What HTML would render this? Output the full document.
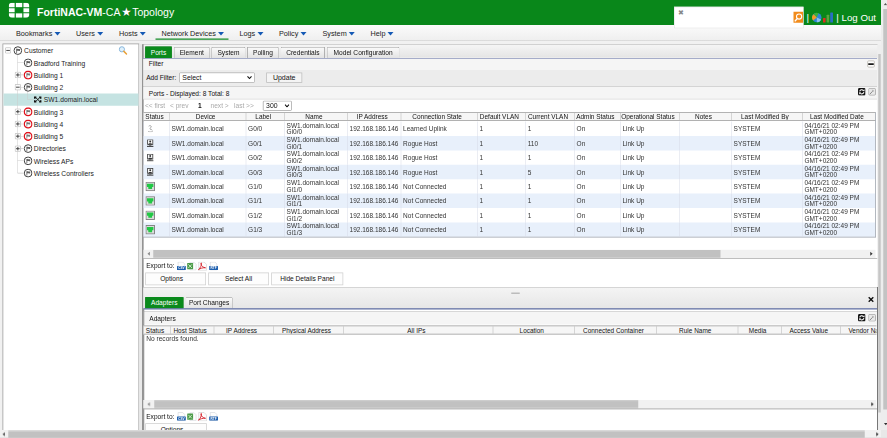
<!DOCTYPE html>
<html>
<head>
<meta charset="utf-8">
<title>FortiNAC Topology</title>
<style>
html,body{margin:0;padding:0;}
body{width:887px;height:438px;overflow:hidden;background:#fff;position:relative;font-family:"Liberation Sans",sans-serif;font-size:6.6px;color:#222;}
.abs{position:absolute;}
#sc{position:absolute;left:0;top:0;width:3548px;height:1752px;transform:scale(0.25);transform-origin:0 0;}
#zz{position:absolute;left:0;top:0;width:887px;height:438px;zoom:4;overflow:hidden;}
#hdr{left:0;top:0;width:881px;height:25.1px;background:#09871a;}
#title{left:37px;top:6.4px;font-size:10.5px;color:#fff;white-space:nowrap;}
#title b{font-weight:bold;}
#menubar{left:0;top:25.1px;width:881px;height:15.2px;background:linear-gradient(#fbfbfb,#efefef);border-bottom:0.8px solid #d4d4d4;}
.mi{position:absolute;top:29.2px;font-size:7.25px;color:#222;white-space:nowrap;}
.mi i{display:inline-block;width:0;height:0;border-left:3.1px solid transparent;border-right:3.1px solid transparent;border-top:3.7px solid #1559b5;margin-left:2.2px;vertical-align:0.3px;}
#search{left:674px;top:6.7px;width:129.4px;height:21.5px;background:#fff;border:0.5px solid #ddd;box-sizing:border-box;}
#sbtn{left:793.6px;top:11.8px;width:9.3px;height:10.9px;background:#f28c1c;}
.hr{position:absolute;top:11.7px;font-size:9.7px;color:#fff;white-space:nowrap;}
#tree{left:2.6px;top:43.6px;width:136.6px;height:392px;border:0.8px solid #959595;box-sizing:border-box;background:#fff;}
.tr{position:absolute;left:3.4px;width:135px;height:12.3px;}
.tr.sel{background:#c5e3e2;}
.tt{position:absolute;font-size:6.7px;line-height:12.3px;white-space:nowrap;color:#222;}
.ic{position:absolute;width:8.7px;height:8.7px;border-radius:50%;border:0.95px solid #3c3c3c;box-sizing:border-box;background:#fff;}
.ic.red{border:1.35px solid #e0141e;width:9.1px;height:9.1px;margin:-0.2px 0 0 -0.2px;}
.ic:after{content:"";position:absolute;left:2.35px;top:1.55px;width:3.1px;height:2.5px;border:0.75px solid #444;box-sizing:border-box;background:#fff;}
.ic:before{content:"";position:absolute;left:2.35px;top:1.55px;width:0.85px;height:4.3px;background:#444;}
.ic.red:after{left:2.15px;top:1.35px;border-color:#666;}
.ic.red:before{left:2.15px;top:1.35px;background:#666;}
.pm{position:absolute;width:6.3px;height:6.1px;border:0.7px solid #c4c4c4;border-radius:0.8px;box-sizing:border-box;background:#fff;}
.pm:before{content:"";position:absolute;left:0.9px;right:0.9px;top:1.95px;height:0.85px;background:#444;}
.pm.plus:after{content:"";position:absolute;top:0.8px;bottom:0.8px;left:2.05px;width:0.85px;background:#444;}
.tl{position:absolute;background:#cacaca;}
.tab{position:absolute;box-sizing:border-box;border:0.8px solid #9c9c9c;border-bottom:none;background:linear-gradient(#fafafa,#e2e2e2);font-size:6.6px;text-align:center;color:#111;border-radius:1.2px 1.2px 0 0;white-space:nowrap;}
.tab.on{background:#0a8a1c;color:#fff;border-color:#087a16;}
.bar{position:absolute;white-space:nowrap;}
.btn{position:absolute;box-sizing:border-box;border:0.75px solid #d0d0d0;background:#fdfdfd;text-align:center;font-size:6.6px;white-space:nowrap;color:#111;}
.sel2{position:absolute;box-sizing:border-box;border:0.7px solid #767676;background:#fff;font-size:6.9px;white-space:nowrap;color:#111;border-radius:1.2px;}
.txt{position:absolute;white-space:nowrap;font-size:6.6px;color:#111;}
.th{position:absolute;font-size:6.45px;padding-right:4px;text-align:center;white-space:nowrap;overflow:hidden;color:#111;box-sizing:border-box;border-left:0.7px solid #b4b4b4;}
.td{position:absolute;font-size:6.5px;white-space:nowrap;overflow:hidden;color:#333;box-sizing:border-box;border-left:0.7px solid #d6dbe6;padding-left:1.9px;}
.rowbg{position:absolute;background:#e8f0fb;}
</style>
</head>
<body>
<div id="sc"><div id="zz">
<div id="hdr" class="abs"></div>
<svg class="abs" style="left:8.8px;top:2.7px" width="20.6" height="15" viewBox="0 0 20.6 15">
<g fill="#fff">
<path d="M0 4.4V3.4Q0 0 3.4 0H5.9V4.4Z"/><rect x="7.1" y="0" width="6.4" height="4.4"/><path d="M14.7 0H17.2Q20.6 0 20.6 3.4V4.4H14.7Z"/>
<rect x="0" y="5.5" width="5.9" height="4.0"/><rect x="14.7" y="5.5" width="5.9" height="4.0"/>
<path d="M0 10.6H5.9V15H3.4Q0 15 0 11.6Z"/><rect x="7.1" y="10.6" width="6.4" height="4.4"/><path d="M14.7 10.6H20.6V11.6Q20.6 15 17.2 15H14.7Z"/>
</g></svg>
<div id="title" class="abs"><b>FortiNAC-VM</b>-CA <span style="font-size:11.5px;margin:0 -1.9px 0 -1.7px;position:relative;top:0.2px;line-height:0;text-shadow:0 0 0.7px #033a08,0 0 0.7px #033a08">★</span> Topology</div>
<div class="abs" style="left:0;top:40px;width:881px;height:4.4px;background:#f1f1f1"></div>
<div class="abs" style="left:0;top:44px;width:3px;height:387px;background:#f1f1f1"></div>
<div id="menubar" class="abs"></div>
<div class="mi" style="left:16px">Bookmarks<i></i></div>
<div class="mi" style="left:76px">Users<i></i></div>
<div class="mi" style="left:119px">Hosts<i></i></div>
<div class="mi" style="left:161.5px">Network Devices<i></i></div>
<div class="abs" style="left:155.5px;top:38.6px;width:73px;height:1.2px;background:#138c27"></div>
<div class="mi" style="left:239.5px">Logs<i></i></div>
<div class="mi" style="left:279px">Policy<i></i></div>
<div class="mi" style="left:322.5px">System<i></i></div>
<div class="mi" style="left:370.5px">Help<i></i></div>
<div id="search" class="abs"></div>
<div class="abs" style="left:677.5px;top:9.5px;font-size:7px;color:#888;line-height:7px">✖</div>
<div id="sbtn" class="abs"></div>
<svg class="abs" style="left:793.5px;top:11.8px" width="10" height="11" viewBox="0 0 10 11"><circle cx="5.6" cy="4.8" r="2.6" fill="none" stroke="#fff" stroke-width="1.1"/><path d="M3.6 7 L1.3 9.6" stroke="#fff" stroke-width="1.4"/></svg>
<div class="hr" style="left:806.5px">|</div>
<div class="hr" style="left:836.3px">| Log Out</div>
<svg class="abs" style="left:811.4px;top:12px" width="22.4" height="11" viewBox="0 0 22.4 11">
<circle cx="5.3" cy="5.6" r="4.7" fill="#2e86d6"/><path d="M5.3 5.6L2 2.3A4.7 4.7 0 0 1 7 1.2Z" fill="#3cae3c"/><path d="M5.3 5.6L2 2.3A4.7 4.7 0 0 0 1.6 8.4Z" fill="#f59a23"/><path d="M5.3 5.6L9.6 7.4A4.7 4.7 0 0 1 5.3 10.3Z" fill="#8cc0ee"/>
<rect x="11.5" y="6" width="2.6" height="4.6" rx="0.5" fill="#e02d22"/><rect x="15.1" y="2.8" width="2.6" height="7.8" rx="0.5" fill="#5aa53c"/><rect x="18.7" y="0.4" width="2.8" height="10.2" rx="0.5" fill="#2a6fc4"/>
</svg>
<div id="tree" class="abs"></div>
<div class="tr sel" style="top:93.5px"></div>
<div class="tl" style="left:17.4px;top:54.9px;width:0.6px;height:118.2px"></div>
<div class="tl" style="left:17.4px;top:62.4px;width:6px;height:0.6px"></div>
<div class="tl" style="left:17.4px;top:74.6px;width:6px;height:0.6px"></div>
<div class="tl" style="left:17.4px;top:86.9px;width:6px;height:0.6px"></div>
<div class="tl" style="left:27.4px;top:91.7px;width:0.6px;height:7.8px"></div>
<div class="tl" style="left:27.4px;top:99.2px;width:6px;height:0.6px"></div>
<div class="tl" style="left:17.4px;top:111.5px;width:6px;height:0.6px"></div>
<div class="tl" style="left:17.4px;top:123.7px;width:6px;height:0.6px"></div>
<div class="tl" style="left:17.4px;top:136.0px;width:6px;height:0.6px"></div>
<div class="tl" style="left:17.4px;top:148.3px;width:6px;height:0.6px"></div>
<div class="tl" style="left:17.4px;top:160.5px;width:6px;height:0.6px"></div>
<div class="tl" style="left:17.4px;top:172.8px;width:6px;height:0.6px"></div>
<svg class="abs" style="left:4.9px;top:47.2px" width="6.2" height="6.4" viewBox="0 0 6.2 6.4"><rect x="0.35" y="0.35" width="5.5" height="5.7" rx="0.9" fill="#fcfcfc" stroke="#b4b4b4" stroke-width="0.75"/><path d="M1.3 3.2H4.9" stroke="#444" stroke-width="1.0"/></svg>
<svg class="abs" style="left:13.2px;top:45.9px" width="9.2" height="9.2" viewBox="0 0 9.2 9.2"><circle cx="4.6" cy="4.6" r="3.85" fill="#fff" stroke="#404040" stroke-width="1.0"/><path d="M3.35 2.7V7.0" stroke="#606060" stroke-width="0.8"/><path d="M3.3 2.9C4.4 2.6 5.4 3.4 6.7 3.0V4.9C5.4 5.3 4.4 4.5 3.3 4.9Z" fill="#606060"/></svg>
<div class="tt" style="left:24.1px;top:44.9px">Customer</div>
<svg class="abs" style="left:23.4px;top:58.2px" width="9.2" height="9.2" viewBox="0 0 9.2 9.2"><circle cx="4.6" cy="4.6" r="3.85" fill="#fff" stroke="#404040" stroke-width="1.0"/><path d="M3.35 2.7V7.0" stroke="#606060" stroke-width="0.8"/><path d="M3.3 2.9C4.4 2.6 5.4 3.4 6.7 3.0V4.9C5.4 5.3 4.4 4.5 3.3 4.9Z" fill="#606060"/></svg>
<div class="tt" style="left:33.8px;top:57.2px">Bradford Training</div>
<svg class="abs" style="left:14.7px;top:71.7px" width="6.2" height="6.4" viewBox="0 0 6.2 6.4"><rect x="0.35" y="0.35" width="5.5" height="5.7" rx="0.9" fill="#fcfcfc" stroke="#b4b4b4" stroke-width="0.75"/><path d="M1.3 3.2H4.9" stroke="#444" stroke-width="1.0"/><path d="M3.1 1.5V4.9" stroke="#444" stroke-width="1.0"/></svg>
<svg class="abs" style="left:23.4px;top:70.4px" width="9.2" height="9.2" viewBox="0 0 9.2 9.2"><circle cx="4.6" cy="4.6" r="3.85" fill="#fff" stroke="#e0121c" stroke-width="1.4"/><path d="M3.35 2.7V7.0" stroke="#777" stroke-width="0.8"/><path d="M3.3 2.9C4.4 2.6 5.4 3.4 6.7 3.0V4.9C5.4 5.3 4.4 4.5 3.3 4.9Z" fill="#777"/></svg>
<div class="tt" style="left:33.8px;top:69.4px">Building 1</div>
<svg class="abs" style="left:14.7px;top:84.0px" width="6.2" height="6.4" viewBox="0 0 6.2 6.4"><rect x="0.35" y="0.35" width="5.5" height="5.7" rx="0.9" fill="#fcfcfc" stroke="#b4b4b4" stroke-width="0.75"/><path d="M1.3 3.2H4.9" stroke="#444" stroke-width="1.0"/></svg>
<svg class="abs" style="left:23.4px;top:82.7px" width="9.2" height="9.2" viewBox="0 0 9.2 9.2"><circle cx="4.6" cy="4.6" r="3.85" fill="#fff" stroke="#404040" stroke-width="1.0"/><path d="M3.35 2.7V7.0" stroke="#606060" stroke-width="0.8"/><path d="M3.3 2.9C4.4 2.6 5.4 3.4 6.7 3.0V4.9C5.4 5.3 4.4 4.5 3.3 4.9Z" fill="#606060"/></svg>
<div class="tt" style="left:33.8px;top:81.7px">Building 2</div>
<svg class="abs" style="left:33.7px;top:95.9px" width="8" height="7" viewBox="0 0 8 7"><path d="M2 1.6L6 5.4M6 1.6L2 5.4" stroke="#111" stroke-width="0.9" fill="none"/><path d="M0.2 0.4H2.6V1.4L1.6 2.8H0.2ZM7.8 0.4H5.4V1.4L6.4 2.8H7.8ZM0.2 6.6H2.6V5.6L1.6 4.2H0.2ZM7.8 6.6H5.4V5.6L6.4 4.2H7.8Z" fill="#111"/></svg>
<div class="tt" style="left:43.8px;top:94.0px">SW1.domain.local</div>
<svg class="abs" style="left:14.7px;top:108.5px" width="6.2" height="6.4" viewBox="0 0 6.2 6.4"><rect x="0.35" y="0.35" width="5.5" height="5.7" rx="0.9" fill="#fcfcfc" stroke="#b4b4b4" stroke-width="0.75"/><path d="M1.3 3.2H4.9" stroke="#444" stroke-width="1.0"/><path d="M3.1 1.5V4.9" stroke="#444" stroke-width="1.0"/></svg>
<svg class="abs" style="left:23.4px;top:107.2px" width="9.2" height="9.2" viewBox="0 0 9.2 9.2"><circle cx="4.6" cy="4.6" r="3.85" fill="#fff" stroke="#e0121c" stroke-width="1.4"/><path d="M3.35 2.7V7.0" stroke="#777" stroke-width="0.8"/><path d="M3.3 2.9C4.4 2.6 5.4 3.4 6.7 3.0V4.9C5.4 5.3 4.4 4.5 3.3 4.9Z" fill="#777"/></svg>
<div class="tt" style="left:33.8px;top:106.2px">Building 3</div>
<svg class="abs" style="left:14.7px;top:120.8px" width="6.2" height="6.4" viewBox="0 0 6.2 6.4"><rect x="0.35" y="0.35" width="5.5" height="5.7" rx="0.9" fill="#fcfcfc" stroke="#b4b4b4" stroke-width="0.75"/><path d="M1.3 3.2H4.9" stroke="#444" stroke-width="1.0"/><path d="M3.1 1.5V4.9" stroke="#444" stroke-width="1.0"/></svg>
<svg class="abs" style="left:23.4px;top:119.5px" width="9.2" height="9.2" viewBox="0 0 9.2 9.2"><circle cx="4.6" cy="4.6" r="3.85" fill="#fff" stroke="#e0121c" stroke-width="1.4"/><path d="M3.35 2.7V7.0" stroke="#777" stroke-width="0.8"/><path d="M3.3 2.9C4.4 2.6 5.4 3.4 6.7 3.0V4.9C5.4 5.3 4.4 4.5 3.3 4.9Z" fill="#777"/></svg>
<div class="tt" style="left:33.8px;top:118.5px">Building 4</div>
<svg class="abs" style="left:14.7px;top:133.1px" width="6.2" height="6.4" viewBox="0 0 6.2 6.4"><rect x="0.35" y="0.35" width="5.5" height="5.7" rx="0.9" fill="#fcfcfc" stroke="#b4b4b4" stroke-width="0.75"/><path d="M1.3 3.2H4.9" stroke="#444" stroke-width="1.0"/><path d="M3.1 1.5V4.9" stroke="#444" stroke-width="1.0"/></svg>
<svg class="abs" style="left:23.4px;top:131.8px" width="9.2" height="9.2" viewBox="0 0 9.2 9.2"><circle cx="4.6" cy="4.6" r="3.85" fill="#fff" stroke="#e0121c" stroke-width="1.4"/><path d="M3.35 2.7V7.0" stroke="#777" stroke-width="0.8"/><path d="M3.3 2.9C4.4 2.6 5.4 3.4 6.7 3.0V4.9C5.4 5.3 4.4 4.5 3.3 4.9Z" fill="#777"/></svg>
<div class="tt" style="left:33.8px;top:130.8px">Building 5</div>
<svg class="abs" style="left:14.7px;top:145.4px" width="6.2" height="6.4" viewBox="0 0 6.2 6.4"><rect x="0.35" y="0.35" width="5.5" height="5.7" rx="0.9" fill="#fcfcfc" stroke="#b4b4b4" stroke-width="0.75"/><path d="M1.3 3.2H4.9" stroke="#444" stroke-width="1.0"/><path d="M3.1 1.5V4.9" stroke="#444" stroke-width="1.0"/></svg>
<svg class="abs" style="left:23.4px;top:144.1px" width="9.2" height="9.2" viewBox="0 0 9.2 9.2"><circle cx="4.6" cy="4.6" r="3.85" fill="#fff" stroke="#404040" stroke-width="1.0"/><path d="M3.35 2.7V7.0" stroke="#606060" stroke-width="0.8"/><path d="M3.3 2.9C4.4 2.6 5.4 3.4 6.7 3.0V4.9C5.4 5.3 4.4 4.5 3.3 4.9Z" fill="#606060"/></svg>
<div class="tt" style="left:33.8px;top:143.1px">Directories</div>
<svg class="abs" style="left:23.4px;top:156.3px" width="9.2" height="9.2" viewBox="0 0 9.2 9.2"><circle cx="4.6" cy="4.6" r="3.85" fill="#fff" stroke="#404040" stroke-width="1.0"/><path d="M3.35 2.7V7.0" stroke="#606060" stroke-width="0.8"/><path d="M3.3 2.9C4.4 2.6 5.4 3.4 6.7 3.0V4.9C5.4 5.3 4.4 4.5 3.3 4.9Z" fill="#606060"/></svg>
<div class="tt" style="left:33.8px;top:155.3px">Wireless APs</div>
<svg class="abs" style="left:23.4px;top:168.6px" width="9.2" height="9.2" viewBox="0 0 9.2 9.2"><circle cx="4.6" cy="4.6" r="3.85" fill="#fff" stroke="#404040" stroke-width="1.0"/><path d="M3.35 2.7V7.0" stroke="#606060" stroke-width="0.8"/><path d="M3.3 2.9C4.4 2.6 5.4 3.4 6.7 3.0V4.9C5.4 5.3 4.4 4.5 3.3 4.9Z" fill="#606060"/></svg>
<div class="tt" style="left:33.8px;top:167.6px">Wireless Controllers</div>
<svg class="abs" style="left:118.4px;top:46px" width="9" height="9" viewBox="0 0 9 9"><circle cx="3.4" cy="3.3" r="2.6" fill="#dff0fb" stroke="#7fb0d8" stroke-width="0.9"/><path d="M5.4 5.4L8 8" stroke="#e9a23a" stroke-width="1.5" stroke-linecap="round"/></svg>
<div class="abs" style="left:139.2px;top:44px;width:3.3px;height:387px;background:#e9e9e9"></div>
<div class="abs" style="left:142.5px;top:44.3px;width:735.5px;height:13.4px;background:linear-gradient(#f6f6f6,#e4e4e4)"></div>
<div class="abs" style="left:142.5px;top:44.3px;width:735.5px;height:0.7px;background:#c4c4c4"></div>
<div class="abs" style="left:142.3px;top:44.3px;width:1.1px;height:387px;background:#747474"></div>
<div class="abs" style="left:877.3px;top:44.3px;width:3.7px;height:387px;background:#eeeeee"></div>
<div class="abs" style="left:878.3px;top:54px;width:2.5px;height:358.4px;background:#c6c6c6"></div>
<div class="tab on" style="left:144.8px;top:46.3px;width:27.4px;height:11.900000000000006px;line-height:12.1px">Ports</div>
<div class="tab" style="left:173.8px;top:46.8px;width:36.0px;height:11.400000000000006px;line-height:10.5px">Element</div>
<div class="tab" style="left:211.3px;top:46.8px;width:34.3px;height:11.400000000000006px;line-height:10.5px">System</div>
<div class="tab" style="left:247.1px;top:46.8px;width:31.7px;height:11.400000000000006px;line-height:10.5px">Polling</div>
<div class="tab" style="left:280.6px;top:46.8px;width:44.5px;height:11.400000000000006px;line-height:10.5px">Credentials</div>
<div class="tab" style="left:326.8px;top:46.8px;width:72.6px;height:11.400000000000006px;line-height:10.5px">Model Configuration</div>
<div class="abs" style="left:143.2px;top:57.7px;width:734.1px;height:1.1px;background:#6472a4"></div>
<div class="abs" style="left:143.2px;top:58.8px;width:734.1px;height:11.2px;background:#f5f5f5"></div>
<div class="abs" style="left:143.2px;top:70px;width:734.1px;height:16.2px;background:#ececec"></div>
<div class="txt" style="left:148.8px;top:60.0px">Filter</div>
<div class="abs" style="left:867.3px;top:60.5px;width:7.4px;height:7.1px;border:0.8px solid #b8b4ac;border-radius:1.4px;box-sizing:border-box;background:#fff"></div><div class="abs" style="left:868.3px;top:63.2px;width:5.4px;height:1.7px;background:#1a1a1a"></div>
<div class="txt" style="left:146.2px;top:73.7px">Add Filter:</div>
<div class="sel2" style="left:179.2px;top:72.4px;width:75.6px;height:10.4px;line-height:8.8px;border-color:#8a8a8a;padding-left:2.6px">Select</div>
<svg class="abs" style="left:247px;top:75.6px" width="5" height="4" viewBox="0 0 5 4"><path d="M0.5 0.8L2.5 3L4.5 0.8" fill="none" stroke="#111" stroke-width="1.1"/></svg>
<div class="btn" style="left:266.2px;top:72.4px;width:36px;height:10.4px;line-height:9px;font-size:7px;border-color:#bbb;background:#f4f4f4">Update</div>
<div class="abs" style="left:143.2px;top:86.2px;width:734.1px;height:0.8px;background:#c9c9c9"></div>
<div class="abs" style="left:143.2px;top:87px;width:734.1px;height:12px;background:#f5f5f5"></div>
<div class="abs" style="left:143.2px;top:98.7px;width:734.1px;height:0.7px;background:#dadada"></div>
<div class="txt" style="left:148.8px;top:89.5px">Ports - Displayed: 8 Total: 8</div>
<svg class="abs" style="left:858px;top:88.1px" width="7.6" height="7.6" viewBox="0 0 7.6 7.6"><rect x="0" y="0" width="7.6" height="7.6" rx="1.5" fill="#141414"/><path d="M1.7 3.4A2.15 2.15 0 0 1 5.3 2.3" fill="none" stroke="#fff" stroke-width="1.05"/><path d="M5.9 4.2A2.15 2.15 0 0 1 2.3 5.3" fill="none" stroke="#fff" stroke-width="1.05"/><path d="M4.4 3.1L6.5 3.3L6.4 1.2Z" fill="#fff"/><path d="M3.2 4.5L1.1 4.3L1.2 6.4Z" fill="#fff"/></svg>
<svg class="abs" style="left:868.3px;top:88.1px" width="7.6" height="7.6" viewBox="0 0 7.6 7.6"><rect x="0.35" y="0.35" width="6.9" height="6.9" rx="1.2" fill="#e9e9e9" stroke="#9a9a9a" stroke-width="0.7"/><path d="M1.6 6.2L4.4 3.2" fill="none" stroke="#8a8a8a" stroke-width="1.0"/><path d="M3.4 1.8C4.6 1.4 5.8 2.4 5.6 3.8C5.2 3.4 4.4 3.0 3.4 1.8Z" fill="#9a9a9a"/></svg>
<div class="txt" style="left:145px;top:101.8px;color:#aaa">&lt;&lt; first</div>
<div class="txt" style="left:170px;top:101.8px;color:#aaa">&lt; prev</div>
<div class="txt" style="left:198px;top:101.8px;font-weight:bold">1</div>
<div class="txt" style="left:210.5px;top:101.8px;color:#aaa">next &gt;</div>
<div class="txt" style="left:234px;top:101.8px;color:#aaa">last &gt;&gt;</div>
<div class="sel2" style="left:263px;top:100.7px;width:28.8px;height:10px;line-height:8.4px;padding-left:2.6px">300</div>
<svg class="abs" style="left:284.4px;top:103.8px" width="5" height="4" viewBox="0 0 5 4"><path d="M0.5 0.8L2.5 3L4.5 0.8" fill="none" stroke="#111" stroke-width="1.1"/></svg>
<div class="abs" style="left:143.3px;top:112.3px;width:732.3px;height:8.4px;background:#f6f6f6;border-top:0.8px solid #9c9c9c;border-bottom:0.8px solid #9a9a9a;box-sizing:border-box"></div>
<div class="th" style="left:143.5px;top:113.1px;width:25.5px;height:6.8px;line-height:7.2px">Status</div>
<div class="th" style="left:169px;top:113.1px;width:76.7px;height:6.8px;line-height:7.2px">Device</div>
<div class="th" style="left:245.7px;top:113.1px;width:38.5px;height:6.8px;line-height:7.2px">Label</div>
<div class="th" style="left:284.2px;top:113.1px;width:63.0px;height:6.8px;line-height:7.2px">Name</div>
<div class="th" style="left:347.2px;top:113.1px;width:53.5px;height:6.8px;line-height:7.2px">IP Address</div>
<div class="th" style="left:400.7px;top:113.1px;width:76.3px;height:6.8px;line-height:7.2px">Connection State</div>
<div class="th" style="left:477px;top:113.1px;width:48.3px;height:6.8px;line-height:7.2px">Default VLAN</div>
<div class="th" style="left:525.3px;top:113.1px;width:48.9px;height:6.8px;line-height:7.2px">Current VLAN</div>
<div class="th" style="left:574.2px;top:113.1px;width:45.8px;height:6.8px;line-height:7.2px">Admin Status</div>
<div class="th" style="left:620px;top:113.1px;width:59.3px;height:6.8px;line-height:7.2px">Operational Status</div>
<div class="th" style="left:679.3px;top:113.1px;width:51.9px;height:6.8px;line-height:7.2px">Notes</div>
<div class="th" style="left:731.2px;top:113.1px;width:70.8px;height:6.8px;line-height:7.2px">Last Modified By</div>
<div class="th" style="left:802px;top:113.1px;width:73.2px;height:6.8px;line-height:7.2px">Last Modified Date</div>
<div class="td" style="left:143.5px;top:121.6px;width:25.5px;height:14.4px;line-height:15.4px;padding-top:0px"></div>
<div class="td" style="left:169px;top:121.6px;width:76.7px;height:14.4px;line-height:15.4px;padding-top:0px">SW1.domain.local</div>
<div class="td" style="left:245.7px;top:121.6px;width:38.5px;height:14.4px;line-height:15.4px;padding-top:0px">G0/0</div>
<div class="td" style="left:284.2px;top:121.6px;width:63.0px;height:14.4px;line-height:6.5px;padding-top:0.4px">SW1.domain.local<br>Gi0/0</div>
<div class="td" style="left:347.2px;top:121.6px;width:53.5px;height:14.4px;line-height:15.4px;padding-top:0px">192.168.186.146</div>
<div class="td" style="left:400.7px;top:121.6px;width:76.3px;height:14.4px;line-height:15.4px;padding-top:0px">Learned Uplink</div>
<div class="td" style="left:477px;top:121.6px;width:48.3px;height:14.4px;line-height:15.4px;padding-top:0px">1</div>
<div class="td" style="left:525.3px;top:121.6px;width:48.9px;height:14.4px;line-height:15.4px;padding-top:0px">1</div>
<div class="td" style="left:574.2px;top:121.6px;width:45.8px;height:14.4px;line-height:15.4px;padding-top:0px">On</div>
<div class="td" style="left:620px;top:121.6px;width:59.3px;height:14.4px;line-height:15.4px;padding-top:0px">Link Up</div>
<div class="td" style="left:679.3px;top:121.6px;width:51.9px;height:14.4px;line-height:15.4px;padding-top:0px"></div>
<div class="td" style="left:731.2px;top:121.6px;width:70.8px;height:14.4px;line-height:15.4px;padding-top:0px">SYSTEM</div>
<div class="td" style="left:802px;top:121.6px;width:73.2px;height:14.4px;line-height:6.5px;padding-top:0.4px">04/16/21 02:49 PM<br>GMT+0200</div>
<svg class="abs" style="left:147.6px;top:124.9px" width="6" height="7.4" viewBox="0 0 6 7.4"><path d="M1.2 1.2C2.2 0.2 3.8 0.6 3.8 1.8C3.8 2.8 2.2 2.8 2.4 3.9C2.6 4.8 4.4 4.2 4.8 5.2" fill="none" stroke="#9a9a9a" stroke-width="0.85"/><path d="M0.6 6.4C2 7 4 7 5.4 6.2" fill="none" stroke="#aaa" stroke-width="0.8"/></svg>
<div class="rowbg" style="left:143.5px;top:136.0px;width:731.7px;height:14.4px"></div>
<div class="td" style="left:143.5px;top:136.0px;width:25.5px;height:14.4px;line-height:15.4px;padding-top:0px"></div>
<div class="td" style="left:169px;top:136.0px;width:76.7px;height:14.4px;line-height:15.4px;padding-top:0px">SW1.domain.local</div>
<div class="td" style="left:245.7px;top:136.0px;width:38.5px;height:14.4px;line-height:15.4px;padding-top:0px">G0/1</div>
<div class="td" style="left:284.2px;top:136.0px;width:63.0px;height:14.4px;line-height:6.5px;padding-top:0.4px">SW1.domain.local<br>Gi0/1</div>
<div class="td" style="left:347.2px;top:136.0px;width:53.5px;height:14.4px;line-height:15.4px;padding-top:0px">192.168.186.146</div>
<div class="td" style="left:400.7px;top:136.0px;width:76.3px;height:14.4px;line-height:15.4px;padding-top:0px">Rogue Host</div>
<div class="td" style="left:477px;top:136.0px;width:48.3px;height:14.4px;line-height:15.4px;padding-top:0px">1</div>
<div class="td" style="left:525.3px;top:136.0px;width:48.9px;height:14.4px;line-height:15.4px;padding-top:0px">110</div>
<div class="td" style="left:574.2px;top:136.0px;width:45.8px;height:14.4px;line-height:15.4px;padding-top:0px">On</div>
<div class="td" style="left:620px;top:136.0px;width:59.3px;height:14.4px;line-height:15.4px;padding-top:0px">Link Up</div>
<div class="td" style="left:679.3px;top:136.0px;width:51.9px;height:14.4px;line-height:15.4px;padding-top:0px"></div>
<div class="td" style="left:731.2px;top:136.0px;width:70.8px;height:14.4px;line-height:15.4px;padding-top:0px">SYSTEM</div>
<div class="td" style="left:802px;top:136.0px;width:73.2px;height:14.4px;line-height:6.5px;padding-top:0.4px">04/16/21 02:49 PM<br>GMT+0200</div>
<svg class="abs" style="left:146.6px;top:139.3px" width="7.4" height="7.8" viewBox="0 0 7.4 7.8"><rect x="1.1" y="0.45" width="5.2" height="4.9" fill="#f6f6f6" stroke="#3a3a3a" stroke-width="0.8"/><circle cx="3.7" cy="2.2" r="0.95" fill="#333"/><path d="M1.7 5.2C1.7 3.5 5.7 3.5 5.7 5.2Z" fill="#333"/><path d="M2.6 5.6H4.8V6.6H2.6Z" fill="#666"/><path d="M0.5 7.1H6.9" stroke="#2a2a2a" stroke-width="1.0"/></svg>
<div class="td" style="left:143.5px;top:150.4px;width:25.5px;height:14.4px;line-height:15.4px;padding-top:0px"></div>
<div class="td" style="left:169px;top:150.4px;width:76.7px;height:14.4px;line-height:15.4px;padding-top:0px">SW1.domain.local</div>
<div class="td" style="left:245.7px;top:150.4px;width:38.5px;height:14.4px;line-height:15.4px;padding-top:0px">G0/2</div>
<div class="td" style="left:284.2px;top:150.4px;width:63.0px;height:14.4px;line-height:6.5px;padding-top:0.4px">SW1.domain.local<br>Gi0/2</div>
<div class="td" style="left:347.2px;top:150.4px;width:53.5px;height:14.4px;line-height:15.4px;padding-top:0px">192.168.186.146</div>
<div class="td" style="left:400.7px;top:150.4px;width:76.3px;height:14.4px;line-height:15.4px;padding-top:0px">Rogue Host</div>
<div class="td" style="left:477px;top:150.4px;width:48.3px;height:14.4px;line-height:15.4px;padding-top:0px">1</div>
<div class="td" style="left:525.3px;top:150.4px;width:48.9px;height:14.4px;line-height:15.4px;padding-top:0px">1</div>
<div class="td" style="left:574.2px;top:150.4px;width:45.8px;height:14.4px;line-height:15.4px;padding-top:0px">On</div>
<div class="td" style="left:620px;top:150.4px;width:59.3px;height:14.4px;line-height:15.4px;padding-top:0px">Link Up</div>
<div class="td" style="left:679.3px;top:150.4px;width:51.9px;height:14.4px;line-height:15.4px;padding-top:0px"></div>
<div class="td" style="left:731.2px;top:150.4px;width:70.8px;height:14.4px;line-height:15.4px;padding-top:0px">SYSTEM</div>
<div class="td" style="left:802px;top:150.4px;width:73.2px;height:14.4px;line-height:6.5px;padding-top:0.4px">04/16/21 02:49 PM<br>GMT+0200</div>
<svg class="abs" style="left:146.6px;top:153.7px" width="7.4" height="7.8" viewBox="0 0 7.4 7.8"><rect x="1.1" y="0.45" width="5.2" height="4.9" fill="#f6f6f6" stroke="#3a3a3a" stroke-width="0.8"/><circle cx="3.7" cy="2.2" r="0.95" fill="#333"/><path d="M1.7 5.2C1.7 3.5 5.7 3.5 5.7 5.2Z" fill="#333"/><path d="M2.6 5.6H4.8V6.6H2.6Z" fill="#666"/><path d="M0.5 7.1H6.9" stroke="#2a2a2a" stroke-width="1.0"/></svg>
<div class="rowbg" style="left:143.5px;top:164.8px;width:731.7px;height:14.4px"></div>
<div class="td" style="left:143.5px;top:164.8px;width:25.5px;height:14.4px;line-height:15.4px;padding-top:0px"></div>
<div class="td" style="left:169px;top:164.8px;width:76.7px;height:14.4px;line-height:15.4px;padding-top:0px">SW1.domain.local</div>
<div class="td" style="left:245.7px;top:164.8px;width:38.5px;height:14.4px;line-height:15.4px;padding-top:0px">G0/3</div>
<div class="td" style="left:284.2px;top:164.8px;width:63.0px;height:14.4px;line-height:6.5px;padding-top:0.4px">SW1.domain.local<br>Gi0/3</div>
<div class="td" style="left:347.2px;top:164.8px;width:53.5px;height:14.4px;line-height:15.4px;padding-top:0px">192.168.186.146</div>
<div class="td" style="left:400.7px;top:164.8px;width:76.3px;height:14.4px;line-height:15.4px;padding-top:0px">Rogue Host</div>
<div class="td" style="left:477px;top:164.8px;width:48.3px;height:14.4px;line-height:15.4px;padding-top:0px">1</div>
<div class="td" style="left:525.3px;top:164.8px;width:48.9px;height:14.4px;line-height:15.4px;padding-top:0px">5</div>
<div class="td" style="left:574.2px;top:164.8px;width:45.8px;height:14.4px;line-height:15.4px;padding-top:0px">On</div>
<div class="td" style="left:620px;top:164.8px;width:59.3px;height:14.4px;line-height:15.4px;padding-top:0px">Link Up</div>
<div class="td" style="left:679.3px;top:164.8px;width:51.9px;height:14.4px;line-height:15.4px;padding-top:0px"></div>
<div class="td" style="left:731.2px;top:164.8px;width:70.8px;height:14.4px;line-height:15.4px;padding-top:0px">SYSTEM</div>
<div class="td" style="left:802px;top:164.8px;width:73.2px;height:14.4px;line-height:6.5px;padding-top:0.4px">04/16/21 02:49 PM<br>GMT+0200</div>
<svg class="abs" style="left:146.6px;top:168.1px" width="7.4" height="7.8" viewBox="0 0 7.4 7.8"><rect x="1.1" y="0.45" width="5.2" height="4.9" fill="#f6f6f6" stroke="#3a3a3a" stroke-width="0.8"/><circle cx="3.7" cy="2.2" r="0.95" fill="#333"/><path d="M1.7 5.2C1.7 3.5 5.7 3.5 5.7 5.2Z" fill="#333"/><path d="M2.6 5.6H4.8V6.6H2.6Z" fill="#666"/><path d="M0.5 7.1H6.9" stroke="#2a2a2a" stroke-width="1.0"/></svg>
<div class="td" style="left:143.5px;top:179.2px;width:25.5px;height:14.4px;line-height:15.4px;padding-top:0px"></div>
<div class="td" style="left:169px;top:179.2px;width:76.7px;height:14.4px;line-height:15.4px;padding-top:0px">SW1.domain.local</div>
<div class="td" style="left:245.7px;top:179.2px;width:38.5px;height:14.4px;line-height:15.4px;padding-top:0px">G1/0</div>
<div class="td" style="left:284.2px;top:179.2px;width:63.0px;height:14.4px;line-height:6.5px;padding-top:0.4px">SW1.domain.local<br>Gi1/0</div>
<div class="td" style="left:347.2px;top:179.2px;width:53.5px;height:14.4px;line-height:15.4px;padding-top:0px">192.168.186.146</div>
<div class="td" style="left:400.7px;top:179.2px;width:76.3px;height:14.4px;line-height:15.4px;padding-top:0px">Not Connected</div>
<div class="td" style="left:477px;top:179.2px;width:48.3px;height:14.4px;line-height:15.4px;padding-top:0px">1</div>
<div class="td" style="left:525.3px;top:179.2px;width:48.9px;height:14.4px;line-height:15.4px;padding-top:0px">1</div>
<div class="td" style="left:574.2px;top:179.2px;width:45.8px;height:14.4px;line-height:15.4px;padding-top:0px">On</div>
<div class="td" style="left:620px;top:179.2px;width:59.3px;height:14.4px;line-height:15.4px;padding-top:0px">Link Up</div>
<div class="td" style="left:679.3px;top:179.2px;width:51.9px;height:14.4px;line-height:15.4px;padding-top:0px"></div>
<div class="td" style="left:731.2px;top:179.2px;width:70.8px;height:14.4px;line-height:15.4px;padding-top:0px">SYSTEM</div>
<div class="td" style="left:802px;top:179.2px;width:73.2px;height:14.4px;line-height:6.5px;padding-top:0.4px">04/16/21 02:49 PM<br>GMT+0200</div>
<svg class="abs" style="left:145.5px;top:181.8px" width="9.4" height="9.4" viewBox="0 0 9.4 9.4"><rect x="0.45" y="0.45" width="8.5" height="8.5" fill="#dcdcdc" stroke="#7c7c7c" stroke-width="0.9"/><path d="M1.5 2.0H7.9V5.3H6.6V7.2H2.8V5.3H1.5Z" fill="#22c845"/></svg>
<div class="rowbg" style="left:143.5px;top:193.6px;width:731.7px;height:14.4px"></div>
<div class="td" style="left:143.5px;top:193.6px;width:25.5px;height:14.4px;line-height:15.4px;padding-top:0px"></div>
<div class="td" style="left:169px;top:193.6px;width:76.7px;height:14.4px;line-height:15.4px;padding-top:0px">SW1.domain.local</div>
<div class="td" style="left:245.7px;top:193.6px;width:38.5px;height:14.4px;line-height:15.4px;padding-top:0px">G1/1</div>
<div class="td" style="left:284.2px;top:193.6px;width:63.0px;height:14.4px;line-height:6.5px;padding-top:0.4px">SW1.domain.local<br>Gi1/1</div>
<div class="td" style="left:347.2px;top:193.6px;width:53.5px;height:14.4px;line-height:15.4px;padding-top:0px">192.168.186.146</div>
<div class="td" style="left:400.7px;top:193.6px;width:76.3px;height:14.4px;line-height:15.4px;padding-top:0px">Not Connected</div>
<div class="td" style="left:477px;top:193.6px;width:48.3px;height:14.4px;line-height:15.4px;padding-top:0px">1</div>
<div class="td" style="left:525.3px;top:193.6px;width:48.9px;height:14.4px;line-height:15.4px;padding-top:0px">1</div>
<div class="td" style="left:574.2px;top:193.6px;width:45.8px;height:14.4px;line-height:15.4px;padding-top:0px">On</div>
<div class="td" style="left:620px;top:193.6px;width:59.3px;height:14.4px;line-height:15.4px;padding-top:0px">Link Up</div>
<div class="td" style="left:679.3px;top:193.6px;width:51.9px;height:14.4px;line-height:15.4px;padding-top:0px"></div>
<div class="td" style="left:731.2px;top:193.6px;width:70.8px;height:14.4px;line-height:15.4px;padding-top:0px">SYSTEM</div>
<div class="td" style="left:802px;top:193.6px;width:73.2px;height:14.4px;line-height:6.5px;padding-top:0.4px">04/16/21 02:49 PM<br>GMT+0200</div>
<svg class="abs" style="left:145.5px;top:196.2px" width="9.4" height="9.4" viewBox="0 0 9.4 9.4"><rect x="0.45" y="0.45" width="8.5" height="8.5" fill="#dcdcdc" stroke="#7c7c7c" stroke-width="0.9"/><path d="M1.5 2.0H7.9V5.3H6.6V7.2H2.8V5.3H1.5Z" fill="#22c845"/></svg>
<div class="td" style="left:143.5px;top:208.0px;width:25.5px;height:14.4px;line-height:15.4px;padding-top:0px"></div>
<div class="td" style="left:169px;top:208.0px;width:76.7px;height:14.4px;line-height:15.4px;padding-top:0px">SW1.domain.local</div>
<div class="td" style="left:245.7px;top:208.0px;width:38.5px;height:14.4px;line-height:15.4px;padding-top:0px">G1/2</div>
<div class="td" style="left:284.2px;top:208.0px;width:63.0px;height:14.4px;line-height:6.5px;padding-top:0.4px">SW1.domain.local<br>Gi1/2</div>
<div class="td" style="left:347.2px;top:208.0px;width:53.5px;height:14.4px;line-height:15.4px;padding-top:0px">192.168.186.146</div>
<div class="td" style="left:400.7px;top:208.0px;width:76.3px;height:14.4px;line-height:15.4px;padding-top:0px">Not Connected</div>
<div class="td" style="left:477px;top:208.0px;width:48.3px;height:14.4px;line-height:15.4px;padding-top:0px">1</div>
<div class="td" style="left:525.3px;top:208.0px;width:48.9px;height:14.4px;line-height:15.4px;padding-top:0px">1</div>
<div class="td" style="left:574.2px;top:208.0px;width:45.8px;height:14.4px;line-height:15.4px;padding-top:0px">On</div>
<div class="td" style="left:620px;top:208.0px;width:59.3px;height:14.4px;line-height:15.4px;padding-top:0px">Link Up</div>
<div class="td" style="left:679.3px;top:208.0px;width:51.9px;height:14.4px;line-height:15.4px;padding-top:0px"></div>
<div class="td" style="left:731.2px;top:208.0px;width:70.8px;height:14.4px;line-height:15.4px;padding-top:0px">SYSTEM</div>
<div class="td" style="left:802px;top:208.0px;width:73.2px;height:14.4px;line-height:6.5px;padding-top:0.4px">04/16/21 02:49 PM<br>GMT+0200</div>
<svg class="abs" style="left:145.5px;top:210.6px" width="9.4" height="9.4" viewBox="0 0 9.4 9.4"><rect x="0.45" y="0.45" width="8.5" height="8.5" fill="#dcdcdc" stroke="#7c7c7c" stroke-width="0.9"/><path d="M1.5 2.0H7.9V5.3H6.6V7.2H2.8V5.3H1.5Z" fill="#22c845"/></svg>
<div class="rowbg" style="left:143.5px;top:222.4px;width:731.7px;height:14.4px"></div>
<div class="td" style="left:143.5px;top:222.4px;width:25.5px;height:14.4px;line-height:15.4px;padding-top:0px"></div>
<div class="td" style="left:169px;top:222.4px;width:76.7px;height:14.4px;line-height:15.4px;padding-top:0px">SW1.domain.local</div>
<div class="td" style="left:245.7px;top:222.4px;width:38.5px;height:14.4px;line-height:15.4px;padding-top:0px">G1/3</div>
<div class="td" style="left:284.2px;top:222.4px;width:63.0px;height:14.4px;line-height:6.5px;padding-top:0.4px">SW1.domain.local<br>Gi1/3</div>
<div class="td" style="left:347.2px;top:222.4px;width:53.5px;height:14.4px;line-height:15.4px;padding-top:0px">192.168.186.146</div>
<div class="td" style="left:400.7px;top:222.4px;width:76.3px;height:14.4px;line-height:15.4px;padding-top:0px">Not Connected</div>
<div class="td" style="left:477px;top:222.4px;width:48.3px;height:14.4px;line-height:15.4px;padding-top:0px">1</div>
<div class="td" style="left:525.3px;top:222.4px;width:48.9px;height:14.4px;line-height:15.4px;padding-top:0px">1</div>
<div class="td" style="left:574.2px;top:222.4px;width:45.8px;height:14.4px;line-height:15.4px;padding-top:0px">On</div>
<div class="td" style="left:620px;top:222.4px;width:59.3px;height:14.4px;line-height:15.4px;padding-top:0px">Link Up</div>
<div class="td" style="left:679.3px;top:222.4px;width:51.9px;height:14.4px;line-height:15.4px;padding-top:0px"></div>
<div class="td" style="left:731.2px;top:222.4px;width:70.8px;height:14.4px;line-height:15.4px;padding-top:0px">SYSTEM</div>
<div class="td" style="left:802px;top:222.4px;width:73.2px;height:14.4px;line-height:6.5px;padding-top:0.4px">04/16/21 02:49 PM<br>GMT+0200</div>
<svg class="abs" style="left:145.5px;top:225.0px" width="9.4" height="9.4" viewBox="0 0 9.4 9.4"><rect x="0.45" y="0.45" width="8.5" height="8.5" fill="#dcdcdc" stroke="#7c7c7c" stroke-width="0.9"/><path d="M1.5 2.0H7.9V5.3H6.6V7.2H2.8V5.3H1.5Z" fill="#22c845"/></svg>
<div class="abs" style="left:143.3px;top:236.8px;width:732.3px;height:0.8px;background:#9aa0aa"></div>
<div class="abs" style="left:875.0px;top:112.3px;width:0.8px;height:125.3px;background:#9aa0aa"></div>
<div class="abs" style="left:143.5px;top:249.8px;width:732.0px;height:8.1px;background:#f1f1f1"></div>
<div class="abs" style="left:153.2px;top:250.0px;width:567.3px;height:7.7px;background:#c1c1c1"></div>
<svg class="abs" style="left:147.0px;top:251.3px" width="3.6" height="5" viewBox="0 0 3 4"><path d="M2.4 0.4V3.6L0.4 2Z" fill="#888"/></svg>
<svg class="abs" style="left:869.5px;top:251.3px" width="3.6" height="5" viewBox="0 0 3 4"><path d="M0.6 0.4V3.6L2.6 2Z" fill="#333"/></svg>
<div class="abs" style="left:143.2px;top:258.2px;width:734.1px;height:0.9px;background:#a8a8a8"></div>
<div class="txt" style="left:146.2px;top:262px">Export to:</div>
<svg class="abs" style="left:176.5px;top:261.4px" width="43" height="9.4" viewBox="0 0 43 9.4">
<g font-family="Liberation Sans, sans-serif" font-weight="bold" font-size="3.1" fill="#fff" text-anchor="middle">
<path d="M1.6 0.5H6.2L8.2 2.5V8.4H1.6Z" fill="#fdfdfd" stroke="#c8ccd2" stroke-width="0.5"/><rect x="0.5" y="4.5" width="8.8" height="3.9" rx="0.5" fill="#1d5fae"/><text x="4.9" y="7.6">CSV</text>
<path d="M13.4 0.8H17.6L19.6 2.8V8.4H13.4Z" fill="#fdfdfd" stroke="#c8ccd2" stroke-width="0.5"/><rect x="10.7" y="1.6" width="5.9" height="6.1" rx="0.5" fill="#4a9a48"/><path d="M11.9 2.9L15.4 6.4M15.4 2.9L11.9 6.4" stroke="#d8f0d0" stroke-width="0.9"/>
<path d="M22.2 0.5H27.6L30 2.9V8.9H22.2Z" fill="#fdfdfd" stroke="#c4c4c4" stroke-width="0.5"/><path d="M22 8.2C23.8 6.6 25.2 3.6 25 1.8C24.9 1 24.2 1.3 24.4 2.4C24.8 4.4 26.6 6 29 6.3C26.6 6 23.6 6.8 22 8.2Z" fill="none" stroke="#d6202a" stroke-width="0.9"/>
<path d="M33.8 0.5H38.4L40.4 2.5V8.4H33.8Z" fill="#fdfdfd" stroke="#c8ccd2" stroke-width="0.5"/><rect x="32.7" y="4.5" width="8.8" height="3.9" rx="0.5" fill="#1d5fae"/><text x="37.1" y="7.6">RTF</text>
</g></svg>
<div class="btn" style="left:145.3px;top:272.6px;width:60.6px;height:12.6px;line-height:11.4px;padding-right:8px">Options</div>
<div class="btn" style="left:208.2px;top:272.6px;width:60.8px;height:12.6px;line-height:11.4px">Select All</div>
<div class="btn" style="left:271.3px;top:272.6px;width:72px;height:12.6px;line-height:11.4px">Hide Details Panel</div>
<div class="abs" style="left:143.2px;top:287px;width:734.1px;height:22px;background:linear-gradient(#f4f4f4,#e6e6e6);border-top:0.8px solid #c8c8c8;box-sizing:border-box"></div>
<div class="abs" style="left:511.3px;top:292.5px;width:8.5px;height:1.5px;background:#bcbcbc"></div>
<svg class="abs" style="left:868px;top:296.6px" width="6" height="6" viewBox="0 0 6 6"><path d="M0.7 0.7L5.3 5.3M5.3 0.7L0.7 5.3" stroke="#111" stroke-width="1.4"/></svg>
<div class="tab on" style="left:144.7px;top:296.4px;width:39.1px;height:12.200000000000045px;line-height:10.8px">Adapters</div>
<div class="tab" style="left:185.4px;top:297.2px;width:47.4px;height:11.400000000000034px;line-height:9.2px">Port Changes</div>
<div class="abs" style="left:143.2px;top:308.3px;width:734.1px;height:1.1px;background:#5f6ea2"></div>
<div class="abs" style="left:143.2px;top:310.9px;width:734.1px;height:13.6px;background:#f5f5f5;border-top:0.8px solid #cdcdcd;box-sizing:border-box"></div>
<div class="txt" style="left:149.3px;top:315.2px">Adapters</div>
<svg class="abs" style="left:858px;top:314.0px" width="7.6" height="7.6" viewBox="0 0 7.6 7.6"><rect x="0" y="0" width="7.6" height="7.6" rx="1.5" fill="#141414"/><path d="M1.7 3.4A2.15 2.15 0 0 1 5.3 2.3" fill="none" stroke="#fff" stroke-width="1.05"/><path d="M5.9 4.2A2.15 2.15 0 0 1 2.3 5.3" fill="none" stroke="#fff" stroke-width="1.05"/><path d="M4.4 3.1L6.5 3.3L6.4 1.2Z" fill="#fff"/><path d="M3.2 4.5L1.1 4.3L1.2 6.4Z" fill="#fff"/></svg>
<svg class="abs" style="left:868.3px;top:314.0px" width="7.6" height="7.6" viewBox="0 0 7.6 7.6"><rect x="0.35" y="0.35" width="6.9" height="6.9" rx="1.2" fill="#e9e9e9" stroke="#9a9a9a" stroke-width="0.7"/><path d="M1.6 6.2L4.4 3.2" fill="none" stroke="#8a8a8a" stroke-width="1.0"/><path d="M3.4 1.8C4.6 1.4 5.8 2.4 5.6 3.8C5.2 3.4 4.4 3.0 3.4 1.8Z" fill="#9a9a9a"/></svg>
<div class="abs" style="left:876.9px;top:287px;width:0.8px;height:143px;background:#777"></div>
<div class="abs" style="left:143.2px;top:309px;width:1px;height:122px;background:#8a8a8a"></div>
<div class="abs" style="left:143.3px;top:325.4px;width:733.3px;height:9.2px;background:#f6f6f6;border-top:0.8px solid #9c9c9c;border-bottom:0.8px solid #9a9a9a;box-sizing:border-box"></div>
<div class="th" style="left:143.5px;top:326.2px;width:26.5px;height:7.6px;line-height:8.0px;">Status</div>
<div class="th" style="left:170.0px;top:326.2px;width:43.7px;height:7.6px;line-height:8.0px;">Host Status</div>
<div class="th" style="left:213.7px;top:326.2px;width:59.2px;height:7.6px;line-height:8.0px;">IP Address</div>
<div class="th" style="left:272.9px;top:326.2px;width:70.7px;height:7.6px;line-height:8.0px;">Physical Address</div>
<div class="th" style="left:343.6px;top:326.2px;width:149.2px;height:7.6px;line-height:8.0px;">All IPs</div>
<div class="th" style="left:492.8px;top:326.2px;width:81.4px;height:7.6px;line-height:8.0px;">Location</div>
<div class="th" style="left:574.2px;top:326.2px;width:82.0px;height:7.6px;line-height:8.0px;">Connected Container</div>
<div class="th" style="left:656.2px;top:326.2px;width:81.6px;height:7.6px;line-height:8.0px;">Rule Name</div>
<div class="th" style="left:737.8px;top:326.2px;width:43.2px;height:7.6px;line-height:8.0px;">Media</div>
<div class="th" style="left:781.0px;top:326.2px;width:59.0px;height:7.6px;line-height:8.0px;">Access Value</div>
<div class="th" style="left:840.0px;top:326.2px;width:36.4px;height:7.6px;line-height:8.0px;text-align:left;padding-left:7.9px;">Vendor Name</div>
<div class="txt" style="left:146.2px;top:334.6px;color:#333">No records found.</div>
<div class="abs" style="left:143.5px;top:400.2px;width:732.9px;height:8.1px;background:#f1f1f1"></div>
<div class="abs" style="left:154.3px;top:400.4px;width:484.0px;height:7.7px;background:#c1c1c1"></div>
<svg class="abs" style="left:147.0px;top:401.8px" width="3.6" height="5" viewBox="0 0 3 4"><path d="M2.4 0.4V3.6L0.4 2Z" fill="#888"/></svg>
<svg class="abs" style="left:870.4px;top:401.8px" width="3.6" height="5" viewBox="0 0 3 4"><path d="M0.6 0.4V3.6L2.6 2Z" fill="#333"/></svg>
<div class="abs" style="left:143.2px;top:408.6px;width:734.1px;height:0.9px;background:#a8a8a8"></div>
<div class="txt" style="left:146.2px;top:412.4px">Export to:</div>
<svg class="abs" style="left:176.5px;top:411.9px" width="43" height="9.4" viewBox="0 0 43 9.4">
<g font-family="Liberation Sans, sans-serif" font-weight="bold" font-size="3.1" fill="#fff" text-anchor="middle">
<path d="M1.6 0.5H6.2L8.2 2.5V8.4H1.6Z" fill="#fdfdfd" stroke="#c8ccd2" stroke-width="0.5"/><rect x="0.5" y="4.5" width="8.8" height="3.9" rx="0.5" fill="#1d5fae"/><text x="4.9" y="7.6">CSV</text>
<path d="M13.4 0.8H17.6L19.6 2.8V8.4H13.4Z" fill="#fdfdfd" stroke="#c8ccd2" stroke-width="0.5"/><rect x="10.7" y="1.6" width="5.9" height="6.1" rx="0.5" fill="#4a9a48"/><path d="M11.9 2.9L15.4 6.4M15.4 2.9L11.9 6.4" stroke="#d8f0d0" stroke-width="0.9"/>
<path d="M22.2 0.5H27.6L30 2.9V8.9H22.2Z" fill="#fdfdfd" stroke="#c4c4c4" stroke-width="0.5"/><path d="M22 8.2C23.8 6.6 25.2 3.6 25 1.8C24.9 1 24.2 1.3 24.4 2.4C24.8 4.4 26.6 6 29 6.3C26.6 6 23.6 6.8 22 8.2Z" fill="none" stroke="#d6202a" stroke-width="0.9"/>
<path d="M33.8 0.5H38.4L40.4 2.5V8.4H33.8Z" fill="#fdfdfd" stroke="#c8ccd2" stroke-width="0.5"/><rect x="32.7" y="4.5" width="8.8" height="3.9" rx="0.5" fill="#1d5fae"/><text x="37.1" y="7.6">RTF</text>
</g></svg>
<div class="btn" style="left:145.3px;top:423.2px;width:61.4px;height:12.6px;line-height:11.4px;padding-right:8px">Options</div>
<div class="abs" style="left:0;top:430.4px;width:887px;height:7.6px;background:#f1f1f1"></div>
<div class="abs" style="left:8.2px;top:430.9px;width:856.6px;height:7.1px;background:#c1c1c1"></div>
<svg class="abs" style="left:2px;top:431.8px" width="3.6" height="5" viewBox="0 0 3 4"><path d="M2.4 0.4V3.6L0.4 2Z" fill="#555"/></svg>
<svg class="abs" style="left:875.6px;top:431.8px" width="3.6" height="5" viewBox="0 0 3 4"><path d="M0.6 0.4V3.6L2.6 2Z" fill="#333"/></svg>
<div class="abs" style="left:880.9px;top:0;width:6.1px;height:430.4px;background:#ededed"></div>
<div class="abs" style="left:883.2px;top:9px;width:3.8px;height:400.4px;background:#c3c3c3"></div>
<svg class="abs" style="left:883.6px;top:2.6px" width="4" height="3" viewBox="0 0 4 3"><path d="M0.2 2.8H3.8L2 0.4Z" fill="#555"/></svg>
<svg class="abs" style="left:883.8px;top:422.8px" width="4" height="3" viewBox="0 0 4 3"><path d="M0.2 0.2H3.8L2 2.6Z" fill="#333"/></svg>
<div class="abs" style="left:881px;top:430.4px;width:6px;height:7.6px;background:#e8e8e8"></div>
</div></div>
</body>
</html>
